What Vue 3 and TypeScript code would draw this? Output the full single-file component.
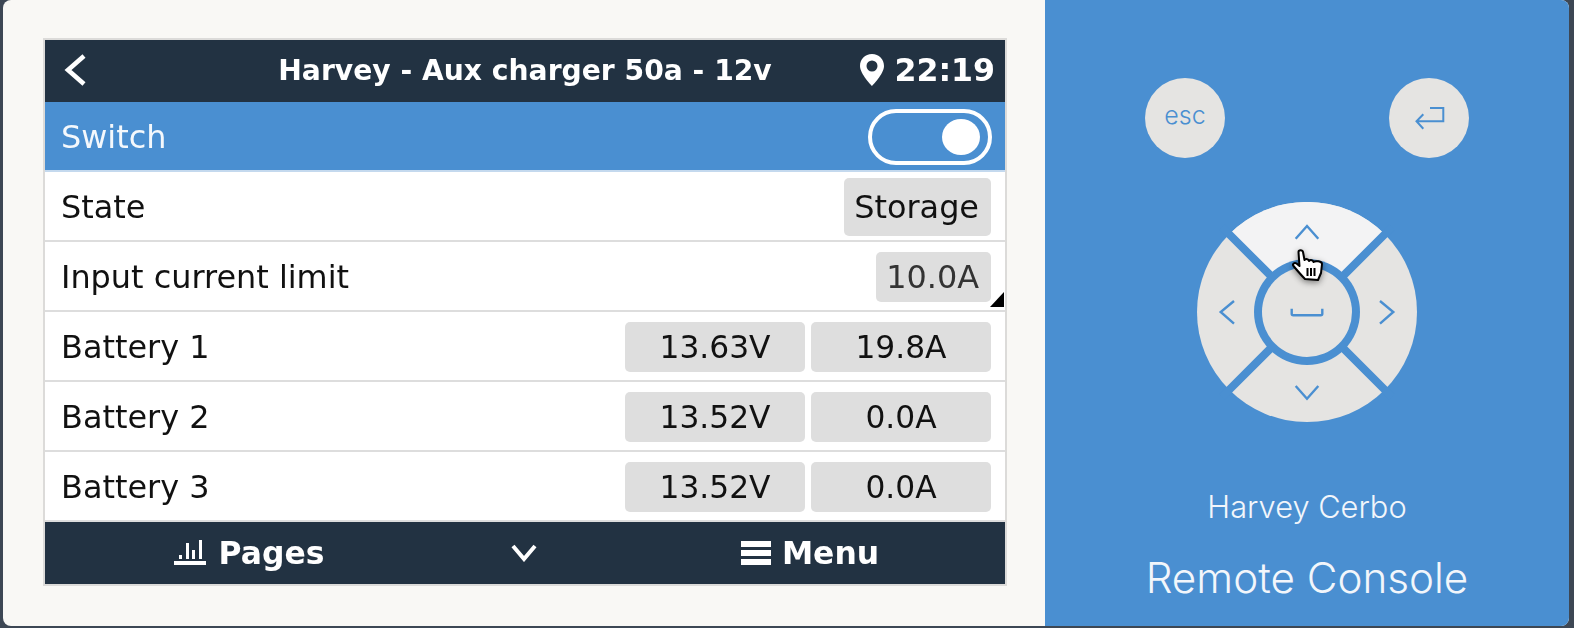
<script setup lang="ts">
interface Row {
  label: string;
  values: string[];
}

const batteries: Row[] = [
  { label: "Battery 1", values: ["13.63V", "19.8A"] },
  { label: "Battery 2", values: ["13.52V", "0.0A"] },
  { label: "Battery 3", values: ["13.52V", "0.0A"] },
];
</script>

<template>
  <div class="page">
    <div class="modal">
      <section class="left">
        <div class="screen">
          <header class="top">
            <svg class="back" width="24" height="36" viewBox="0 0 24 36">
              <path d="M20 4 L4 18 L20 32" fill="none" stroke="#fff" stroke-width="4.6" />
            </svg>
            <span class="title">Harvey - Aux charger 50a - 12v</span>
            <div class="clock">
              <svg width="24" height="32" viewBox="0 0 24 32">
                <path
                  fill="#fff"
                  fill-rule="evenodd"
                  d="M12 0C5 0 0 5 0 12C0 20 12 32 12 32S24 20 24 12C24 5 19 0 12 0ZM12 6.5A5.5 5.5 0 1 1 12 17.5A5.5 5.5 0 1 1 12 6.5Z"
                />
              </svg>
              <span>22:19</span>
            </div>
          </header>

          <div class="row active">
            <span>Switch</span>
            <div class="toggle"><i class="knob"></i></div>
          </div>
          <div class="row">
            <span>State</span>
            <span class="val tall">Storage</span>
          </div>
          <div class="row">
            <span>Input current limit</span>
            <span class="val dim">10.0A</span>
            <i class="corner"></i>
          </div>
          <div v-for="b in batteries" :key="b.label" class="row">
            <span>{{ b.label }}</span>
            <div class="vals">
              <span v-for="(v, i) in b.values" :key="i" class="val wide">{{ v }}</span>
            </div>
          </div>

          <footer class="bottom">
            <div class="foot pages">
              <svg width="32" height="26" viewBox="0 0 32 26">
                <path fill="#fff" d="M0 21h32v4H0zM5 15h3v4H5zM12 3h3v16h-3zM18 10h3v9h-3zM25 0h3v19h-3z" />
              </svg>
              <span>Pages</span>
            </div>
            <div class="foot chev">
              <svg width="26" height="18" viewBox="0 0 26 18">
                <path d="M2 2 L13 15 L24 2" fill="none" stroke="#fff" stroke-width="4" />
              </svg>
            </div>
            <div class="foot menu">
              <svg width="30" height="24" viewBox="0 0 30 24">
                <path fill="#fff" d="M0 0h30v6H0zM0 9h30v6H0zM0 18h30v6H0z" />
              </svg>
              <span>Menu</span>
            </div>
          </footer>
        </div>
      </section>

      <aside class="right">
        <div class="keys">
          <button type="button" class="key">esc</button>
          <button type="button" class="key">
            <svg width="80" height="80" viewBox="0 0 80 80">
              <path
                d="M41 30H54.3V43.3H27.5M34.3 36.3L27.5 43.3L34.3 50.7"
                fill="none"
                stroke="#4a8fd1"
                stroke-width="2"
              />
            </svg>
          </button>
        </div>

        <div class="dpad">
          <svg width="220" height="220" viewBox="0 0 220 220">
            <circle cx="110" cy="110" r="110" fill="#e5e4e2" />
            <path d="M110 110L32.2 32.2A110 110 0 0 1 187.8 32.2Z" fill="#f3f3f4" />
            <path d="M25 25L195 195M195 25L25 195" stroke="#4a8fd1" stroke-width="8" />
            <circle cx="110" cy="110" r="53" fill="#4a8fd1" />
            <circle cx="110" cy="110" r="45" fill="#e5e4e2" />
            <g fill="none" stroke="#4a8fd1" stroke-width="2.4">
              <path d="M98.7 36.7L110 24L121.3 36.7" />
              <path d="M98.7 184L110 196.7L121.3 184" />
              <path d="M37 99L23.7 110L37 121.7" />
              <path d="M183 99L196.3 110L183 121.7" />
              <path d="M94.7 106.7V111.8Q94.7 113.3 96.2 113.3H123.8Q125.3 113.3 125.3 111.8V106.7" />
            </g>
          </svg>
          <svg class="hand" width="32" height="34" viewBox="0 0 32 34">
            <path
              d="M6.5 3C6.5 .5 10.5 .5 11 3L12.5 11C14 9.5 16.5 10 17 12C18.5 10.5 21 11 21.5 13C23 11.5 30 12 30 15L29 24L26 31L13 30C10 27 4 20 1.5 17C0 15 2.5 13 4.5 14.5L7.5 17Z"
              fill="#fff"
              stroke="#000"
              stroke-width="2"
              stroke-linejoin="round"
            />
            <path d="M15.5 19V27M19 19V27M22.5 19V27" stroke="#000" stroke-width="2" />
          </svg>
        </div>

        <div class="name">Harvey Cerbo</div>
        <div class="product">Remote Console</div>
      </aside>
    </div>
  </div>
</template>

<style scoped>
.page {
  width: 1574px;
  height: 628px;
  box-sizing: border-box;
  padding: 0 5px 2px 3px;
  background: #3d4754;
  overflow: hidden;
}

.modal {
  display: flex;
  height: 100%;
  border-radius: 8px;
  overflow: hidden;
  background: #f9f8f5;
}

.left {
  width: 1042px;
  padding: 38px 0 0 40px;
  box-sizing: border-box;
}

.screen {
  width: 960px;
  height: 544px;
  border: 2px solid #dcdbd9;
  display: flex;
  flex-direction: column;
  background: #fff;
  font-family: "DejaVu Sans", sans-serif;
  color: #111;
  filter: blur(0.35px);
}

.top {
  position: relative;
  height: 62px;
  box-sizing: border-box;
  padding-bottom: 2px;
  display: flex;
  align-items: center;
  justify-content: center;
  background: #223242;
  color: #fff;
  font-weight: 700;
}

.back {
  position: absolute;
  left: 19px;
  top: 12px;
}

.title {
  font-size: 28.2px;
}

.clock {
  position: absolute;
  right: 10px;
  top: 12px;
  display: flex;
  align-items: center;
  gap: 10px;
  font-size: 31.6px;
}

.row {
  position: relative;
  height: 70px;
  box-sizing: border-box;
  padding: 2px 14px 0 16px;
  border-bottom: 2px solid #dddddd;
  display: flex;
  align-items: center;
  justify-content: space-between;
  font-size: 31.9px;
}

.row.active {
  background: #4a8fd1;
  color: #f4f8fc;
  border-bottom-color: #c4d9ee;
}

.toggle {
  width: 124px;
  height: 56px;
  box-sizing: border-box;
  margin-right: -1px;
  border: 4px solid #fff;
  border-radius: 28px;
  display: flex;
  align-items: center;
  justify-content: flex-end;
  padding-right: 8px;
}

.knob {
  display: block;
  width: 38px;
  height: 36px;
  border-radius: 50%;
  background: #fff;
}

.val {
  height: 50px;
  box-sizing: border-box;
  padding: 0 12px 0 10px;
  border-radius: 5px;
  background: #dedede;
  display: flex;
  align-items: center;
  justify-content: center;
}

.val.tall {
  height: 58px;
}

.val.dim {
  color: #333;
}

.val.wide {
  width: 180px;
  padding: 0;
  font-size: 31.3px;
}

.vals {
  display: flex;
  gap: 6px;
}

.corner {
  position: absolute;
  right: 1px;
  bottom: 3px;
  border-style: solid;
  border-width: 0 0 15px 14px;
  border-color: transparent transparent #000 transparent;
}

.bottom {
  height: 62px;
  display: grid;
  grid-template-columns: 408px 144px 408px;
  background: #223242;
  color: #fff;
  font-weight: 700;
  font-size: 31.4px;
}

.foot {
  display: flex;
  align-items: center;
  justify-content: center;
}

.pages {
  gap: 13px;
}

.chev {
  padding-right: 2px;
}

.menu {
  gap: 11px;
  padding-left: 18px;
}

.right {
  flex: 1;
  background: #4a8fd1;
  display: flex;
  flex-direction: column;
  align-items: center;
  padding-top: 78px;
  font-family: Inter, sans-serif;
  font-weight: 300;
  color: #f2f6fb;
}

.keys {
  width: 324px;
  display: flex;
  justify-content: space-between;
}

.key {
  width: 80px;
  height: 80px;
  padding: 0 0 6px;
  border: 0;
  border-radius: 50%;
  background: #e5e4e2;
  color: #4a8fd1;
  font-family: Inter, sans-serif;
  font-weight: 300;
  font-size: 25px;
  display: flex;
  align-items: center;
  justify-content: center;
}

.key svg {
  margin-top: 6px;
}

.dpad {
  position: relative;
  width: 220px;
  height: 220px;
  margin-top: 44px;
}

.dpad svg {
  display: block;
}

.hand {
  position: absolute;
  left: 95px;
  top: 47px;
  filter: drop-shadow(0 2px 3px rgba(0, 0, 0, 0.45));
}

.name {
  margin-top: 67px;
  font-size: 30.8px;
  line-height: 36px;
}

.product {
  margin-top: 28px;
  font-size: 42.2px;
  line-height: 50px;
}
</style>
